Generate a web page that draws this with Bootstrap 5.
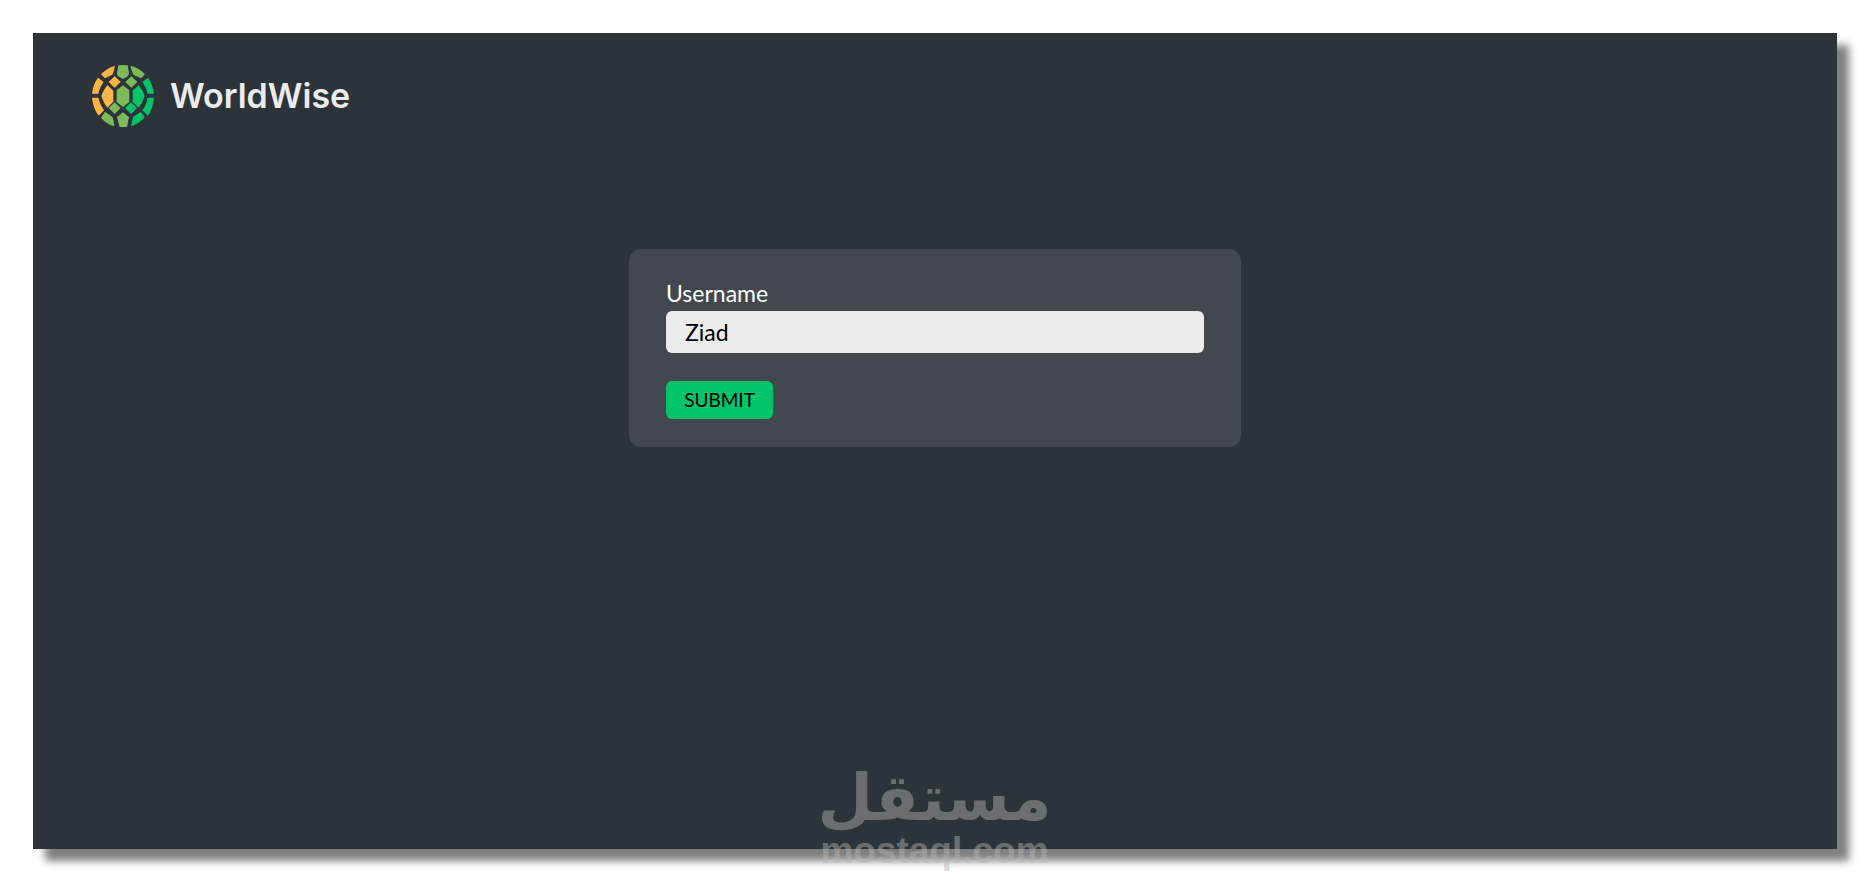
<!DOCTYPE html>
<html lang="en">
<head>
<meta charset="utf-8">
<meta name="viewport" content="width=device-width, initial-scale=1">
<title>WorldWise</title>
<link href="https://cdn.jsdelivr.net/npm/bootstrap@5.3.0/dist/css/bootstrap.min.css" rel="stylesheet">
<style>
  body { background: #fff; font-family: Lato, "Open Sans", sans-serif; }
  .app-panel { margin: 33px 32px 41px 33px; background: #2d3439; box-shadow: 12px 12px 8px #808080; }
  .app-header { height: 93px; padding: 31px 59px 0; }
  .brand { gap: 16px; color: #ececec; font: 600 34px/64px Inter, sans-serif; }
  .brand svg { width: 62px; height: 62px; }
  .login-form { width: 100%; max-width: 612px; margin-top: 123px; padding: 28px 37px; border-radius: 12px; background: #42484d; }
  .login-form .form-label { color: #fff; font-size: 23px; line-height: 32px; margin-bottom: 2px; }
  .login-form .form-control { height: 42px; padding: 0 19px; border: 0; border-radius: 6px; background: #ececec; color: #000; font-size: 23px; }
  .btn-submit { width: 107px; height: 38px; margin-top: 28px; padding: 0; border: 0; border-radius: 6px; background: #00c46a; color: #000; font-size: 19px; line-height: 38px; }
  .btn-submit:hover { background: #00b662; color: #000; }
  .watermark { bottom: 22px; color: #b4b4b4; opacity: .45; pointer-events: none; }
  .watermark-ar { font: 700 64px/72px "DejaVu Sans", sans-serif; }
  .watermark-en { font: 700 37px/34px "Liberation Sans", sans-serif; }
</style>
</head>
<body class="min-vh-100 d-flex flex-column position-relative">
<main class="app-panel flex-grow-1 d-flex flex-column">
  <header class="app-header">
    <a href="#" class="brand d-inline-flex align-items-center text-decoration-none">
      <svg viewBox="0 0 186 186" aria-hidden="true">
        <g fill="#ffb545">
          <path d="M69 2Q45 9 27 28L39 40L61 29Q66 18 69 2Z"/>
          <path d="M18 38Q4 56 0 86H19Q24 64 35 51Z"/>
          <path d="M68 34L86 51L68 68L50 51Z"/>
          <path d="M46 60L64 77V110L46 128Q33 111 28 93Q33 77 46 60Z"/>
          <path d="M0 98H19Q23 118 36 136L20 152Q4 132 0 98Z"/>
        </g>
        <g fill="#7dba58">
          <path d="M79 1Q93 -1 107 1L111 24Q111 31 104 36L93 42L82 36Q73 31 75 24Z"/>
          <path d="M115 2Q142 8 159 28L147 40L124 29Q119 17 115 2Z"/>
          <path d="M118 34L136 51L118 68L100 51Z"/>
          <path d="M93 61L112 76V111L93 126L74 111V76Z"/>
          <path d="M68 112L86 129L68 147L50 129Z"/>
          <path d="M39 140L61 155Q66 167 67 184Q43 177 27 158Z"/>
          <path d="M93 142L111 156L105 186Q93 187 83 186L75 156Z"/>
        </g>
        <g fill="#00c46a">
          <path d="M168 38Q183 58 186 86H167Q163 67 151 51Z"/>
          <path d="M140 60Q153 76 158 93Q153 111 140 128L122 111V77Z"/>
          <path d="M167 98H186Q183 130 168 152L151 136Q163 121 167 98Z"/>
          <path d="M117 112L135 129L117 147L99 129Z"/>
          <path d="M147 140L158 157Q141 177 117 184Q119 168 124 155Z"/>
        </g>
      </svg>
      <span>WorldWise</span>
    </a>
  </header>
  <form class="login-form mx-auto" onsubmit="return false">
    <label for="username" class="form-label d-block">Username</label>
    <input id="username" type="text" class="form-control" value="Ziad">
    <button type="submit" class="btn btn-submit">SUBMIT</button>
  </form>
</main>
<div class="watermark position-absolute start-0 end-0 text-center">
  <div class="watermark-ar" lang="ar" dir="rtl">مستقل</div>
  <div class="watermark-en">mostaql.com</div>
</div>
<script src="https://cdn.jsdelivr.net/npm/bootstrap@5.3.0/dist/js/bootstrap.bundle.min.js"></script>
</body>
</html>
